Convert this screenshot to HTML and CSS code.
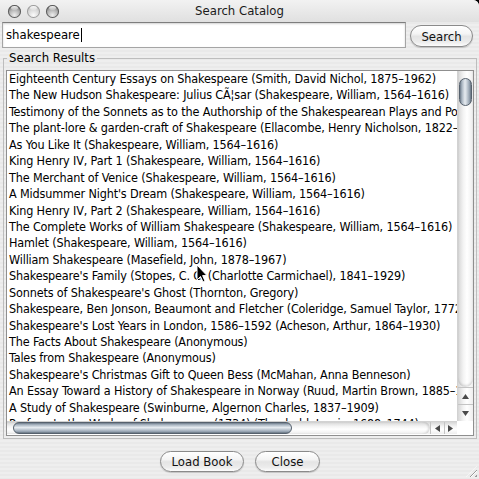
FILE: index.html
```html
<!DOCTYPE html>
<html>
<head>
<meta charset="utf-8">
<title>Search Catalog</title>
<link rel="stylesheet" href="styles.css">
</head>
<body>
<div class="window">
  <div class="titlebar">
    <div class="lights"><span class="light"></span><span class="light mid"></span><span class="light"></span></div>
    <div class="title">Search Catalog</div>
    <div></div>
  </div>
  <div class="searchrow">
    <div class="field"><span>shakespeare</span><span class="caret"></span></div>
    <button class="btn search">Search</button>
  </div>
  <fieldset class="group">
    <legend>Search Results</legend>
    <div class="list">
      <div class="viewport">
        <div class="row">Eighteenth Century Essays on Shakespeare (Smith, David Nichol, 1875–1962)</div>
        <div class="row">The New Hudson Shakespeare: Julius CÃ¦sar (Shakespeare, William, 1564–1616)</div>
        <div class="row">Testimony of the Sonnets as to the Authorship of the Shakespearean Plays and Poems (Stronach, George, 1830–1915)</div>
        <div class="row">The plant-lore &amp; garden-craft of Shakespeare (Ellacombe, Henry Nicholson, 1822–1916)</div>
        <div class="row">As You Like It (Shakespeare, William, 1564–1616)</div>
        <div class="row">King Henry IV, Part 1 (Shakespeare, William, 1564–1616)</div>
        <div class="row">The Merchant of Venice (Shakespeare, William, 1564–1616)</div>
        <div class="row">A Midsummer Night's Dream (Shakespeare, William, 1564–1616)</div>
        <div class="row">King Henry IV, Part 2 (Shakespeare, William, 1564–1616)</div>
        <div class="row">The Complete Works of William Shakespeare (Shakespeare, William, 1564–1616)</div>
        <div class="row">Hamlet (Shakespeare, William, 1564–1616)</div>
        <div class="row">William Shakespeare (Masefield, John, 1878–1967)</div>
        <div class="row">Shakespeare's Family (Stopes, C. C. (Charlotte Carmichael), 1841–1929)</div>
        <div class="row">Sonnets of Shakespeare's Ghost (Thornton, Gregory)</div>
        <div class="row">Shakespeare, Ben Jonson, Beaumont and Fletcher (Coleridge, Samuel Taylor, 1772–1834)</div>
        <div class="row">Shakespeare's Lost Years in London, 1586–1592 (Acheson, Arthur, 1864–1930)</div>
        <div class="row">The Facts About Shakespeare (Anonymous)</div>
        <div class="row">Tales from Shakespeare (Anonymous)</div>
        <div class="row">Shakespeare's Christmas Gift to Queen Bess (McMahan, Anna Benneson)</div>
        <div class="row">An Essay Toward a History of Shakespeare in Norway (Ruud, Martin Brown, 1885–1941)</div>
        <div class="row">A Study of Shakespeare (Swinburne, Algernon Charles, 1837–1909)</div>
        <div class="row">Preface to the Works of Shakespeare (1734) (Theobald, Lewis, 1688–1744)</div>
      </div>
      <div class="vscroll">
        <div class="vtrack"><div class="vthumb"></div></div>
        <div class="varrows">
          <div class="arrow"><svg width="7" height="5" viewBox="0 0 7 5"><polygon points="3.5,0 7,5 0,5" fill="#4a4a4a"/></svg></div>
          <div class="arrow"><svg width="7" height="5" viewBox="0 0 7 5"><polygon points="0,0 7,0 3.5,5" fill="#4a4a4a"/></svg></div>
        </div>
      </div>
      <div class="hscroll">
        <div class="htrack"><div class="hthumb"></div></div>
        <div class="harrows">
          <div class="harrow"><svg width="5" height="7" viewBox="0 0 5 7"><polygon points="0,3.5 5,0 5,7" fill="#4a4a4a"/></svg></div>
          <div class="harrow"><svg width="5" height="7" viewBox="0 0 5 7"><polygon points="0,0 5,3.5 0,7" fill="#4a4a4a"/></svg></div>
        </div>
      </div>
      <div class="corner"></div>
    </div>
  </fieldset>
  <div class="buttons">
    <button class="btn load">Load Book</button>
    <button class="btn close">Close</button>
  </div>
  <div class="grip"></div>
  <svg class="cursor" width="12" height="19" viewBox="0 0 12 19"><path d="M1,1 L1,16 L4.5,12.5 L7,18 L9,17 L6.6,11.6 L11,11.6 Z" fill="#000" stroke="#fff" stroke-width="1" stroke-linejoin="round"/></svg>
</div>
</body>
</html>
```

FILE: styles.css
```css
* { box-sizing: border-box; }
html, body { margin: 0; padding: 0; background: #000; }
body {
  font-family: "DejaVu Sans Condensed", "DejaVu Sans", "Liberation Sans", sans-serif;
  font-size: 12.6px;
  color: #000;
}
.window {
  position: relative;
  width: 479px;
  height: 479px;
  overflow: hidden;
  border-top-right-radius: 6px;
  background: repeating-linear-gradient(#eeeeee 0 2px, #e9e9e9 2px 4px);
}
.titlebar {
  height: 22px;
  display: grid;
  grid-template-columns: 1fr auto 1fr;
  align-items: center;
  background: linear-gradient(#f2f2f2, #e0e0e0);
}
.lights { display: flex; gap: 6px; padding-left: 8px; }
.light {
  position: relative;
  width: 13px;
  height: 13px;
  border-radius: 50%;
  background: radial-gradient(circle at 50% 78%, #eeeeee 0, #b4b4b4 45%, #7a7a7a 78%, #555 100%);
  box-shadow: inset 0 0 0 1px #5a5a5a;
}
.light::after {
  content: "";
  position: absolute;
  left: 3px; top: 1.5px;
  width: 7px; height: 4px;
  border-radius: 50%;
  background: linear-gradient(rgba(255,255,255,.95), rgba(255,255,255,.2));
}
.light.mid {
  background: radial-gradient(circle at 50% 78%, #fbfbfb 0, #dadada 45%, #bdbdbd 80%, #a2a2a2 100%);
  box-shadow: inset 0 0 0 1px #9c9c9c;
}
.title { font-size: 13px; color: #1a1a1a; line-height: 22px; }

.searchrow {
  height: 26px;
  display: flex;
  gap: 4px;
  padding: 0 6px 0 2px;
}
.field {
  flex: 1;
  height: 26px;
  background: #fff;
  border: 1px solid #a5a5a5;
  border-top-color: #7e7e7e;
  box-shadow: inset 0 1px 2px rgba(0,0,0,.18);
  padding-left: 3px;
  font-size: 13px;
  line-height: 24px;
  display: flex;
  align-items: center;
}
.caret { display: inline-block; width: 1px; height: 14px; background: #000; margin-left: 1px; }

.btn {
  font-family: inherit;
  font-size: 13px;
  color: #111;
  height: 21px;
  padding: 0;
  border: 1px solid #8a8a8a;
  border-radius: 11px;
  background: linear-gradient(#ffffff 0%, #f4f4f4 40%, #e4e4e4 52%, #ececec 80%, #fdfdfd 100%);
  box-shadow: 0 1px 1px rgba(0,0,0,.18);
  line-height: 19px;
}
.btn.search { width: 63px; margin-top: 3px; height: 22px; }

.group {
  margin: 2px 2px 0 3px;
  padding: 4px 2px 2px 2px;
  border: 1px solid #bdbdbd;
  min-width: 0;
}
.group legend {
  font-size: 13px;
  line-height: 16px;
  padding: 0 2px;
  margin-left: 1px;
}
.list {
  height: 366px;
  border: 1px solid #8f8f8f;
  background: #fff;
  display: grid;
  grid-template-columns: 1fr 16px;
  grid-template-rows: 1fr 13px;
  padding-bottom: 1px;
}
.viewport {
  overflow: hidden;
  padding-left: 2px;
  min-width: 0;
}
.row {
  white-space: nowrap;
  font-size: 12.5px;
  letter-spacing: -0.15px;
  line-height: 16.45px;
  height: 16.45px;
}

.vscroll {
  display: flex;
  flex-direction: column;
  background: linear-gradient(to right, #d6d6d6, #f3f3f3 35%, #ffffff 60%, #eeeeee);
  border-left: 1px solid #d2d2d2;
}
.vtrack {
  flex: 1;
  padding: 7px 1px 0 1px;
  border-radius: 0 0 8px 8px;
  box-shadow: inset 0 -2px 2px rgba(0,0,0,.12);
}
.vthumb {
  width: 13px;
  height: 28px;
  border-radius: 7px;
  border: 1px solid #56616d;
  background: linear-gradient(to right, #6c7988 0, #aab6c2 18%, #e6ebf0 45%, #cdd5dd 60%, #97a4b2 85%, #66737f 100%);
}
.varrows { height: 34px; display: flex; flex-direction: column; }
.arrow {
  flex: 1;
  display: flex;
  align-items: center;
  justify-content: center;
  border-top: 1px solid #c4c4c4;
}
.hscroll {
  display: flex;
  background: linear-gradient(#d6d6d6, #f3f3f3 35%, #ffffff 60%, #eeeeee);
  border-top: 1px solid #d2d2d2;
}
.htrack {
  flex: 1;
  padding: 0 0 0 6px;
  border-radius: 0 7px 7px 0;
  box-shadow: inset -2px 0 2px rgba(0,0,0,.12);
}
.hthumb {
  width: 279px;
  height: 12px;
  border-radius: 6px;
  border: 1px solid #56616d;
  background: linear-gradient(#6c7988 0, #aab6c2 18%, #e6ebf0 45%, #cdd5dd 60%, #97a4b2 85%, #66737f 100%);
}
.harrows { width: 27px; display: flex; }
.harrow {
  flex: 1;
  display: flex;
  align-items: center;
  justify-content: center;
  border-left: 1px solid #c4c4c4;
}
.corner { background: #fff; }

.buttons {
  display: flex;
  justify-content: center;
  gap: 11px;
  margin-top: 12px;
  padding-left: 1px;
}
.btn.load { width: 84px; }
.btn.close { width: 65px; }

.grip {
  position: absolute;
  right: 2px;
  bottom: 2px;
  width: 11px;
  height: 11px;
  background: repeating-linear-gradient(135deg, transparent 0 2px, #9a9a9a 2px 3px, #ffffff 3px 4px);
  clip-path: polygon(100% 0, 100% 100%, 0 100%);
}
.cursor { position: absolute; left: 196px; top: 264px; }
```
